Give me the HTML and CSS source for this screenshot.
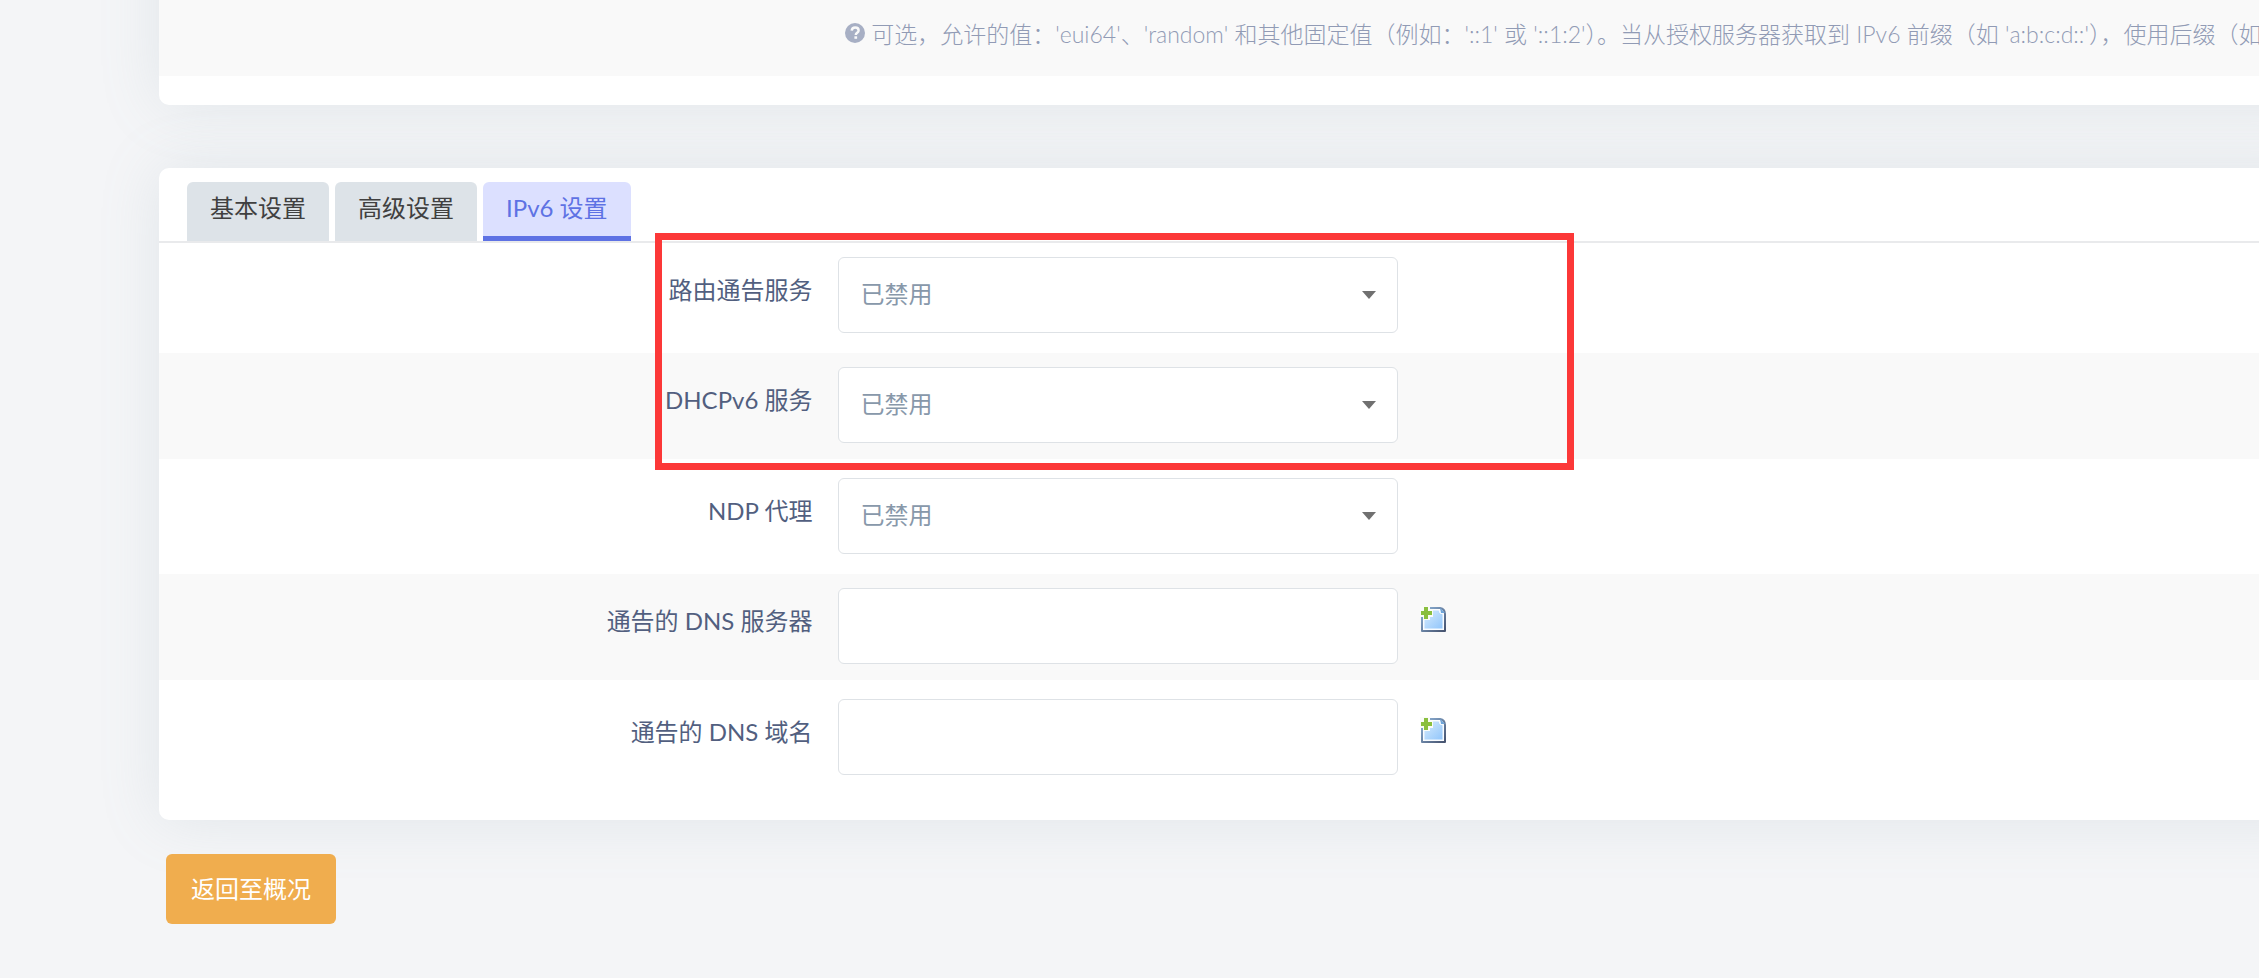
FILE: index.html
```html
<!DOCTYPE html>
<html lang="zh-CN">
<head>
    <meta charset="UTF-8">
    <meta name="viewport" content="width=device-width, initial-scale=1.0">
    <title>接口设置</title>
    <link rel="stylesheet" href="styles.css">
</head>
<body>

    <main class="page">
        <!-- 上方表单的末尾 -->
        <section class="card card-top">
            <div class="help-row">
                <p class="help">
                    <svg class="help-icon" viewBox="0 0 20 20" aria-hidden="true">
                        <circle cx="10" cy="10" r="10" fill="#a7afc4"/>
                        <path d="M6.7 7.7C6.9 5.6 8.3 4.6 10.2 4.6c2 0 3.4 1.1 3.4 2.8 0 2.4-2.8 2.4-2.8 4.5" fill="none" stroke="#f9f9f9" stroke-width="2.5"/>
                        <rect x="9.4" y="13.3" width="2.7" height="2.5" fill="#f9f9f9"/>
                    </svg>
                    可选，允许的值：'eui64'、'random' 和其他固定值（例如：'::1' 或 '::1:2'）。当从授权服务器获取到 IPv6 前缀（如 'a:b:c:d::'），使用后缀（如
                </p>
            </div>
        </section>

        <!-- DHCP 服务器设置 -->
        <section class="card">
            <nav class="tabs">
                <a class="tab" href="#general">基本设置</a>
                <a class="tab" href="#advanced">高级设置</a>
                <a class="tab active" href="#ipv6">IPv6 设置</a>
            </nav>

            <form class="rows" id="ipv6">
                <div class="row">
                    <label for="ra">路由通告服务</label>
                    <div class="select">
                        <select id="ra"><option>已禁用</option></select>
                    </div>
                </div>
                <div class="row">
                    <label for="dhcpv6">DHCPv6 服务</label>
                    <div class="select">
                        <select id="dhcpv6"><option>已禁用</option></select>
                    </div>
                </div>
                <div class="row">
                    <label for="ndp">NDP 代理</label>
                    <div class="select">
                        <select id="ndp"><option>已禁用</option></select>
                    </div>
                </div>
                <div class="row">
                    <label for="dns">通告的 DNS 服务器</label>
                    <input type="text" id="dns">
                    <button class="add" type="button" aria-label="添加">
                        <svg viewBox="0 0 26 26"><use href="#icon-add"/></svg>
                    </button>
                </div>
                <div class="row">
                    <label for="domain">通告的 DNS 域名</label>
                    <input type="text" id="domain">
                    <button class="add" type="button" aria-label="添加">
                        <svg viewBox="0 0 26 26"><use href="#icon-add"/></svg>
                    </button>
                </div>
                <div class="highlight"></div>
            </form>
        </section>

        <button class="back" type="button">返回至概况</button>
    </main>

    <!-- 添加图标 -->
    <svg class="sprite" aria-hidden="true">
        <defs>
            <linearGradient id="sheet" x1="0" y1="0" x2="1" y2="1">
                <stop offset="0" stop-color="#d8ecfd"/>
                <stop offset="1" stop-color="#90c5fb"/>
            </linearGradient>
            <linearGradient id="edge" x1="0" y1="0" x2="1" y2="1">
                <stop offset="0" stop-color="#8fb4da"/>
                <stop offset="1" stop-color="#46536f"/>
            </linearGradient>
        </defs>
        <symbol id="icon-add" viewBox="0 0 26 26">
            <path d="M2 2h18q5 1 5 6v17H2z" fill="#fff" stroke="url(#edge)" stroke-width="2" stroke-linejoin="round"/>
            <path d="M4 4h15l1 3 3 1v15H4z" fill="url(#sheet)" stroke="#f4faff" stroke-width="1"/>
            <path d="M20 2l5 5h-4z" fill="#6ea5da"/>
            <path d="M0 0h10v3h3v8h-3v3H3v-3H0z" fill="#fafcf8"/>
            <path d="M4 1h4v4h4v4H8v4H4V9H1V5h3z" fill="#8abf3f"/>
        </symbol>
    </svg>

</body>
</html>
```

FILE: styles.css
```css
* {
    margin: 0;
    padding: 0;
    box-sizing: border-box;
}

body {
    font-family: Lato, "Noto Sans CJK SC", sans-serif;
    font-size: 24px;
    line-height: 36px;
    color: #525f7f;
    background-color: #f4f5f7;
    min-height: 100vh;
    overflow: hidden;
}

/* 卡片延伸到窗口右侧之外 */
.page {
    margin-right: -64px;
    padding-left: 159px;
}

/* 卡片 */
.card {
    margin-bottom: 34px;
    padding-bottom: 25px;
    background-color: #fff;
    border-radius: 10px 0 0 10px;
    box-shadow: 0 0 60px rgba(136, 160, 170, 0.17);
}

.card-top {
    margin-top: -80px;
    margin-bottom: 63px;
    padding-bottom: 29px;
}

.help-row {
    padding: 96px 0 24px 31.7%;
    background-color: #f9f9f9;
    overflow: hidden;
}

.help {
    font-size: 23px;
    font-weight: 300;
    color: #919bb5;
    white-space: nowrap;
}

.help-icon {
    width: 20px;
    height: 20px;
}

/* 选项卡 */
.tabs {
    display: flex;
    gap: 6px;
    padding: 14px 28px 0;
    border-bottom: 2px solid #e9eaec;
}

.tab {
    padding: 8px 23px 10px;
    color: #404040;
    text-decoration: none;
    background-color: #dde3e8;
    border-bottom: 5px solid #dde3e8;
    border-radius: 6px 6px 0 0;
}

.tab.active {
    color: #5e72e4;
    background-color: #dce0ff;
    border-bottom-color: #5e72e4;
}

/* 表单行 */
.rows {
    position: relative;
}

.row {
    display: flex;
    align-items: flex-start;
    margin-bottom: 4px;
    padding: 14px 0 16px;
}

.row:nth-child(even) {
    margin-bottom: 5px;
    background-color: #f9f9f9;
}

.row label {
    width: 30.2%;
    margin-right: 25px;
    padding-top: 15px;
    text-align: right;
}

.select {
    position: relative;
}

.select::after {
    content: "";
    position: absolute;
    top: 34px;
    right: 22px;
    border: 7px solid transparent;
    border-top: 8px solid #707070;
    border-bottom: 0;
    pointer-events: none;
}

.row select,
.row input {
    display: block;
    width: 560px;
    height: 76px;
    padding: 0 22px 3px;
    font: inherit;
    color: #8898aa;
    background-color: #fff;
    border: 1px solid #dee2e6;
    border-radius: 6px;
    appearance: none;
}

.add {
    width: 26px;
    height: 26px;
    margin: 18px 0 0 22px;
    background: none;
    border: 0;
    cursor: pointer;
}

.add svg {
    display: block;
}

/* 标注框 */
.highlight {
    position: absolute;
    top: -10px;
    left: 496px;
    width: 919px;
    height: 237px;
    border: 7px solid #fc3838;
    pointer-events: none;
}

.back {
    margin-left: 7px;
    padding: 17px 25px;
    font: inherit;
    color: #fff;
    background-color: #f0ad4e;
    border: 0;
    border-radius: 6px;
    cursor: pointer;
}

.sprite {
    position: absolute;
    width: 0;
    height: 0;
}
```
